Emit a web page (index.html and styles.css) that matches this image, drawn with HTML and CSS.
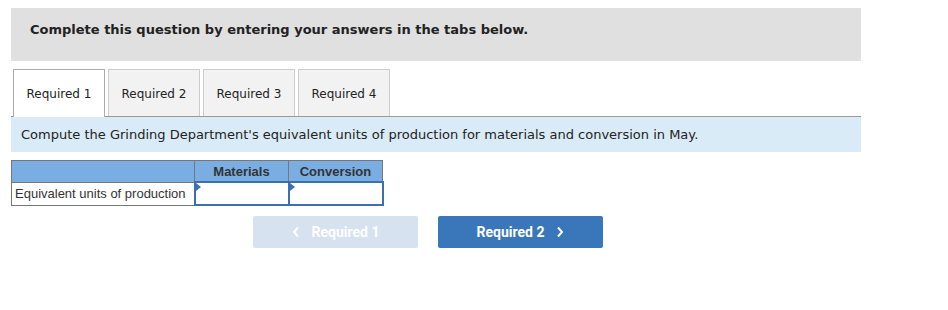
FILE: index.html
```html
<!DOCTYPE html>
<html>
<head>
    <title>Required 1</title>
    <link rel="stylesheet" href="styles.css">
</head>
<body>
    <div class="container">
        <div class="prompt">Complete this question by entering your answers in the tabs below.</div>

        <div class="tabs">
            <div class="tab active">Required 1</div>
            <div class="tab">Required 2</div>
            <div class="tab">Required 3</div>
            <div class="tab">Required 4</div>
        </div>

        <div class="instruction">Compute the Grinding Department's equivalent units of production for materials and conversion in May.</div>

        <table class="units-table">
            <tr>
                <th class="label-col"></th>
                <th>Materials</th>
                <th>Conversion</th>
            </tr>
            <tr>
                <td class="label-col">Equivalent units of production</td>
                <td class="input-cell"><span class="marker"></span></td>
                <td class="input-cell"><span class="marker"></span></td>
            </tr>
        </table>

        <div class="nav-buttons">
            <div class="nav-btn prev">
                <svg width="8" height="12" viewBox="0 0 8 12"><path d="M6 1.5 L2 6 L6 10.5" fill="none" stroke="#fff" stroke-width="2"/></svg>
                <span>Required 1</span>
            </div>
            <div class="nav-btn next">
                <span>Required 2</span>
                <svg width="8" height="12" viewBox="0 0 8 12"><path d="M2 1.5 L6 6 L2 10.5" fill="none" stroke="#fff" stroke-width="2"/></svg>
            </div>
        </div>
    </div>
</body>
</html>
```

FILE: styles.css
```css
body {
    margin: 8px;
    background: #fff;
    font-family: "DejaVu Sans", Verdana, sans-serif;
    color: #222;
}

.container {
    width: 850px;
    margin-left: 3px;
}

.prompt {
    background: #e0e0e0;
    height: 53px;
    box-sizing: border-box;
    padding: 14px 0 0 19px;
    font-size: 13px;
    font-weight: bold;
    color: #222;
    margin-bottom: 8px;
}

.tabs {
    display: flex;
    gap: 3px;
    padding-left: 2px;
    border-bottom: 1px solid #999;
}

.tab {
    width: 90px;
    display: flex;
    align-items: center;
    justify-content: center;
    padding-top: 1px;
    height: 45px;
    font-size: 12px;
    color: #222;
    background: #f2f2f2;
    border: 1px solid #ccc;
    border-bottom: none;
}

.tab.active {
    background: #fff;
    border-color: #aaa;
    margin-bottom: -1px;
    height: 46px;
}

.instruction {
    background: #daebf8;
    height: 35px;
    padding-left: 10px;
    display: flex;
    align-items: center;
    font-size: 13px;
    color: #222;
}

.units-table {
    margin-top: 8px;
    border-collapse: collapse;
    font-family: "Liberation Sans", Arial, sans-serif;
    font-size: 13px;
}

.units-table th {
    background: #7aaee3;
    border: 1px solid #777;
    height: 20px;
    font-weight: bold;
    color: #333;
    width: 93px;
    padding: 0;
}

.units-table th.label-col {
    width: 182px;
}

.units-table td {
    border: 1px solid #777;
    height: 21px;
    padding: 0 3px;
    color: #333;
}

.units-table td.input-cell {
    position: relative;
    border: 2px solid #3a70b0;
    padding: 0;
}

.marker {
    position: absolute;
    left: 0;
    top: 0;
    width: 0;
    height: 0;
    border-top: 4px solid transparent;
    border-bottom: 4px solid transparent;
    border-left: 5px solid #3a70b0;
}

.nav-buttons {
    display: flex;
    gap: 20px;
    margin-top: 10px;
    padding-left: 242px;
}

.nav-btn {
    width: 165px;
    height: 32px;
    border-radius: 2px;
    display: flex;
    align-items: center;
    justify-content: center;
    gap: 12px;
    font-family: Roboto, "Liberation Sans", sans-serif;
    font-size: 14px;
    font-weight: bold;
    color: #fff;
}

.nav-btn.prev {
    background: #d6e2f0;
}

.nav-btn.next {
    background: #3a76ba;
}
```
